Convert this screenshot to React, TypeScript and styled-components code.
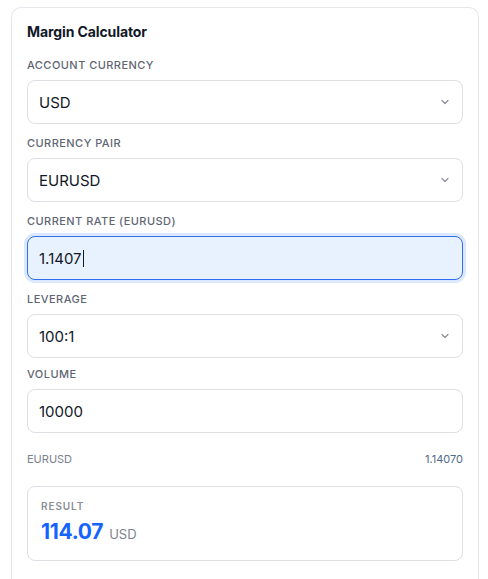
import React from "react";
import styled, { createGlobalStyle } from "styled-components";

const GlobalStyle = createGlobalStyle`
  html, body {
    margin: 0;
    padding: 0;
    background: #ffffff;
  }
  body {
    font-family: Inter, "Noto Sans", Roboto, sans-serif;
    color: #111827;
    -webkit-font-smoothing: antialiased;
  }
  * { box-sizing: border-box; }
`;

const Page = styled.div`
  padding: 7px 9px 0 11px;
`;

const Card = styled.section`
  border: 1px solid #e4e7ec;
  border-bottom: none;
  border-radius: 10px 10px 0 0;
  padding: 15px 15px 40px 15px;
  background: #fff;
`;

const Title = styled.h2`
  margin: 0 0 17px 0;
  font-size: 14px;
  line-height: 18px;
  font-weight: 700;
  color: #111827;
  letter-spacing: -0.1px;
`;

const Field = styled.div<{ $pullUp?: number }>`
  display: flex;
  flex-direction: column;
  gap: 8px;
  margin-top: ${(p) => (p.$pullUp ? `-${p.$pullUp}px` : "0")};
  margin-bottom: 12px;
`;

const Label = styled.label`
  font-size: 11px;
  line-height: 14px;
  font-weight: 500;
  letter-spacing: 0.45px;
  text-transform: uppercase;
  color: #5f6673;
`;

const Box = styled.div<{ $focused?: boolean }>`
  position: relative;
  height: 44px;
  display: flex;
  align-items: center;
  padding: 0 11px;
  border: 1px solid ${(p) => (p.$focused ? "#2f6fed" : "#dcdfe4")};
  border-radius: 8px;
  background: ${(p) => (p.$focused ? "#e8f1fe" : "#ffffff")};
  box-shadow: ${(p) => (p.$focused ? "0 0 0 3px #dbe8fd" : "none")};
  font-size: 15px;
  color: #111827;
`;

const Value = styled.span`
  flex: 1;
`;

const Caret = styled.span`
  display: inline-block;
  width: 1px;
  height: 17px;
  background: #111827;
  vertical-align: middle;
  margin-left: 1px;
  margin-top: -2px;
`;

const Chevron = styled.svg`
  width: 10px;
  height: 10px;
  margin-right: 1px;
  color: #8a9099;
`;

const InfoRow = styled.div`
  display: flex;
  justify-content: space-between;
  align-items: center;
  margin-top: 19px;
  margin-bottom: 20px;
  font-size: 11px;
  line-height: 14px;
  color: #7a818c;
`;

const InfoValue = styled.span`
  color: #4f6a8a;
`;

const ResultBox = styled.div`
  border: 1px solid #dcdfe4;
  border-radius: 8px;
  padding: 13px 13px 14px 13px;
  display: flex;
  flex-direction: column;
  gap: 5px;
`;

const ResultLabel = styled.div`
  font-size: 10px;
  line-height: 13px;
  font-weight: 600;
  letter-spacing: 0.9px;
  text-transform: uppercase;
  color: #8a8f98;
`;

const ResultLine = styled.div`
  display: flex;
  align-items: baseline;
  gap: 6px;
`;

const Amount = styled.span`
  font-size: 21px;
  line-height: 28px;
  font-weight: 700;
  color: #1463ff;
  letter-spacing: -0.3px;
`;

const Unit = styled.span`
  font-size: 13px;
  color: #7d838d;
`;

function ChevronDown() {
  return (
    <Chevron viewBox="0 0 10 10" fill="none">
      <path d="M2 3.5 L5 6.5 L8 3.5" stroke="currentColor" strokeWidth="1.2" strokeLinecap="round" strokeLinejoin="round" />
    </Chevron>
  );
}

function SelectField({ label, value }: { label: string; value: string }) {
  return (
    <Field>
      <Label>{label}</Label>
      <Box>
        <Value>{value}</Value>
        <ChevronDown />
      </Box>
    </Field>
  );
}

export default function App() {
  return (
    <>
      <GlobalStyle />
      <Page>
        <Card>
          <Title>Margin Calculator</Title>
          <SelectField label="Account Currency" value="USD" />
          <SelectField label="Currency Pair" value="EURUSD" />
          <Field>
            <Label>Current Rate (EURUSD)</Label>
            <Box $focused>
              <Value>
                1.1407
                <Caret />
              </Value>
            </Box>
          </Field>
          <SelectField label="Leverage" value="100:1" />
          <Field $pullUp={3}>
            <Label>Volume</Label>
            <Box>
              <Value>10000</Value>
            </Box>
          </Field>
          <InfoRow>
            <span>EURUSD</span>
            <InfoValue>1.14070</InfoValue>
          </InfoRow>
          <ResultBox>
            <ResultLabel>Result</ResultLabel>
            <ResultLine>
              <Amount>114.07</Amount>
              <Unit>USD</Unit>
            </ResultLine>
          </ResultBox>
        </Card>
      </Page>
    </>
  );
}
